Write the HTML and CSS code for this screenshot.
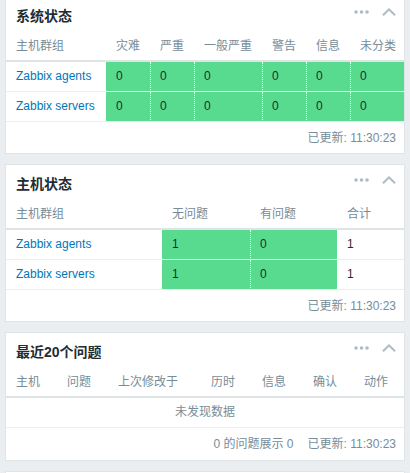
FILE: index.html
```html
<!DOCTYPE html>
<html lang="zh-CN">
<head>
    <meta charset="UTF-8">
    <meta name="viewport" content="width=device-width, initial-scale=1.0">
    <title>仪表板</title>
    <link rel="stylesheet" href="styles.css">
</head>
<body>
    <div class="dashboard">
        <div class="widget">
            <div class="widget-head">
                <h4>系统状态</h4>
                <div class="widget-tools">
                    <button class="btn-more" title="调整"><svg width="15" height="4" viewBox="0 0 15 4"><circle cx="2" cy="2" r="1.8"/><circle cx="7.5" cy="2" r="1.8"/><circle cx="13" cy="2" r="1.8"/></svg></button>
                    <button class="btn-collapse" title="折叠"><svg width="14" height="8" viewBox="0 0 14 8"><path d="M1 7.2 L7 1.4 L13 7.2"/></svg></button>
                </div>
            </div>
            <table class="list-table sys-status">
                <colgroup><col><col><col><col><col><col><col></colgroup>
                <thead>
                    <tr><th>主机群组</th><th>灾难</th><th>严重</th><th>一般严重</th><th>警告</th><th>信息</th><th>未分类</th></tr>
                </thead>
                <tbody>
                    <tr>
                        <td><a href="#">Zabbix agents</a></td>
                        <td class="normal-bg">0</td><td class="normal-bg">0</td><td class="normal-bg">0</td>
                        <td class="normal-bg">0</td><td class="normal-bg">0</td><td class="normal-bg">0</td>
                    </tr>
                    <tr>
                        <td><a href="#">Zabbix servers</a></td>
                        <td class="normal-bg">0</td><td class="normal-bg">0</td><td class="normal-bg">0</td>
                        <td class="normal-bg">0</td><td class="normal-bg">0</td><td class="normal-bg">0</td>
                    </tr>
                </tbody>
            </table>
            <div class="widget-foot"><span>已更新: 11:30:23</span></div>
        </div>

        <div class="widget">
            <div class="widget-head">
                <h4>主机状态</h4>
                <div class="widget-tools">
                    <button class="btn-more" title="调整"><svg width="15" height="4" viewBox="0 0 15 4"><circle cx="2" cy="2" r="1.8"/><circle cx="7.5" cy="2" r="1.8"/><circle cx="13" cy="2" r="1.8"/></svg></button>
                    <button class="btn-collapse" title="折叠"><svg width="14" height="8" viewBox="0 0 14 8"><path d="M1 7.2 L7 1.4 L13 7.2"/></svg></button>
                </div>
            </div>
            <table class="list-table host-status">
                <colgroup><col><col><col><col></colgroup>
                <thead>
                    <tr><th>主机群组</th><th>无问题</th><th>有问题</th><th>合计</th></tr>
                </thead>
                <tbody>
                    <tr>
                        <td><a href="#">Zabbix agents</a></td>
                        <td class="normal-bg">1</td><td class="normal-bg">0</td><td>1</td>
                    </tr>
                    <tr>
                        <td><a href="#">Zabbix servers</a></td>
                        <td class="normal-bg">1</td><td class="normal-bg">0</td><td>1</td>
                    </tr>
                </tbody>
            </table>
            <div class="widget-foot"><span>已更新: 11:30:23</span></div>
        </div>

        <div class="widget">
            <div class="widget-head">
                <h4>最近20个问题</h4>
                <div class="widget-tools">
                    <button class="btn-more" title="调整"><svg width="15" height="4" viewBox="0 0 15 4"><circle cx="2" cy="2" r="1.8"/><circle cx="7.5" cy="2" r="1.8"/><circle cx="13" cy="2" r="1.8"/></svg></button>
                    <button class="btn-collapse" title="折叠"><svg width="14" height="8" viewBox="0 0 14 8"><path d="M1 7.2 L7 1.4 L13 7.2"/></svg></button>
                </div>
            </div>
            <table class="list-table problems">
                <colgroup><col><col><col><col><col><col><col></colgroup>
                <thead>
                    <tr><th>主机</th><th>问题</th><th>上次修改于</th><th>历时</th><th>信息</th><th>确认</th><th>动作</th></tr>
                </thead>
                <tbody>
                    <tr><td class="nothing-to-show" colspan="7">未发现数据</td></tr>
                </tbody>
            </table>
            <div class="widget-foot foot-tall"><span>0 的问题展示 0</span><span>已更新: 11:30:23</span></div>
        </div>

        <div class="widget widget-stub"></div>
    </div>
</body>
</html>
```

FILE: styles.css
```css
html, body {
    margin: 0;
}
body {
    background: #ebeef0;
    font-family: "Liberation Sans", "Noto Sans CJK SC", sans-serif;
    font-size: 12px;
    color: #1f2c33;
    overflow: hidden;
}

.dashboard {
    padding: 0 5px;
    margin-top: -4px;
}

.widget {
    background: #fff;
    border: 1px solid #dfe4e7;
    margin-bottom: 10px;
}
.widget-stub {
    height: 1px;
    border-bottom: none;
    margin-bottom: 0;
}

.widget-head {
    display: flex;
    height: 35px;
    padding: 0 8px 0 10px;
}
.widget-head h4 {
    flex: 1;
    margin: 0;
    padding-top: 10px;
    font-size: 14px;
    line-height: 18px;
    font-weight: bold;
    color: #1f2c33;
}
.widget-tools {
    display: flex;
    align-items: center;
    gap: 13px;
    height: 30px;
}
.widget-tools button {
    border: none;
    background: none;
    padding: 0;
    display: flex;
    cursor: pointer;
}
.btn-more svg {
    fill: #aebbc3;
}
.btn-collapse svg {
    fill: none;
    stroke: #aebbc3;
    stroke-width: 2;
}

.list-table {
    width: 100%;
    border-collapse: separate;
    border-spacing: 0;
    table-layout: fixed;
}
.list-table th {
    text-align: left;
    font-weight: normal;
    color: #768d99;
    padding: 6px 4px 6px 10px;
    line-height: 16px;
    border-bottom: 2px solid #dfe4e7;
    white-space: nowrap;
}
.list-table td {
    padding: 6px 4px 6px 10px;
    line-height: 17px;
    border-bottom: 1px solid #ebeef0;
    white-space: nowrap;
}
.list-table a {
    color: #0275b8;
    text-decoration: none;
}
.normal-bg {
    background: #59db8f;
}
.list-table td.normal-bg + td.normal-bg {
    border-left: 1px dotted #fff;
    padding-left: 9px;
}
.list-table td.nothing-to-show {
    text-align: center;
    color: #768d99;
    padding-left: 4px;
}

/* column widths */
.sys-status col:nth-child(1) { width: 100px; }
.sys-status col:nth-child(2) { width: 44px; }
.sys-status col:nth-child(3) { width: 44px; }
.sys-status col:nth-child(4) { width: 68px; }
.sys-status col:nth-child(5) { width: 44px; }
.sys-status col:nth-child(6) { width: 44px; }
.sys-status col:nth-child(7) { width: 54px; }

.host-status col:nth-child(1) { width: 156px; }
.host-status col:nth-child(2) { width: 88px; }
.host-status col:nth-child(3) { width: 87px; }
.host-status col:nth-child(4) { width: 67px; }

.problems col:nth-child(1) { width: 51px; }
.problems col:nth-child(2) { width: 51px; }
.problems col:nth-child(3) { width: 93px; }
.problems col:nth-child(4) { width: 51px; }
.problems col:nth-child(5) { width: 51px; }
.problems col:nth-child(6) { width: 51px; }
.problems col:nth-child(7) { width: 50px; }

.widget-foot {
    display: flex;
    justify-content: flex-end;
    gap: 14px;
    height: 31px;
    box-sizing: border-box;
    padding: 8px 8px 0 10px;
    line-height: 16px;
    color: #768d99;
}
.widget-foot.foot-tall {
    height: 32px;
}
```
